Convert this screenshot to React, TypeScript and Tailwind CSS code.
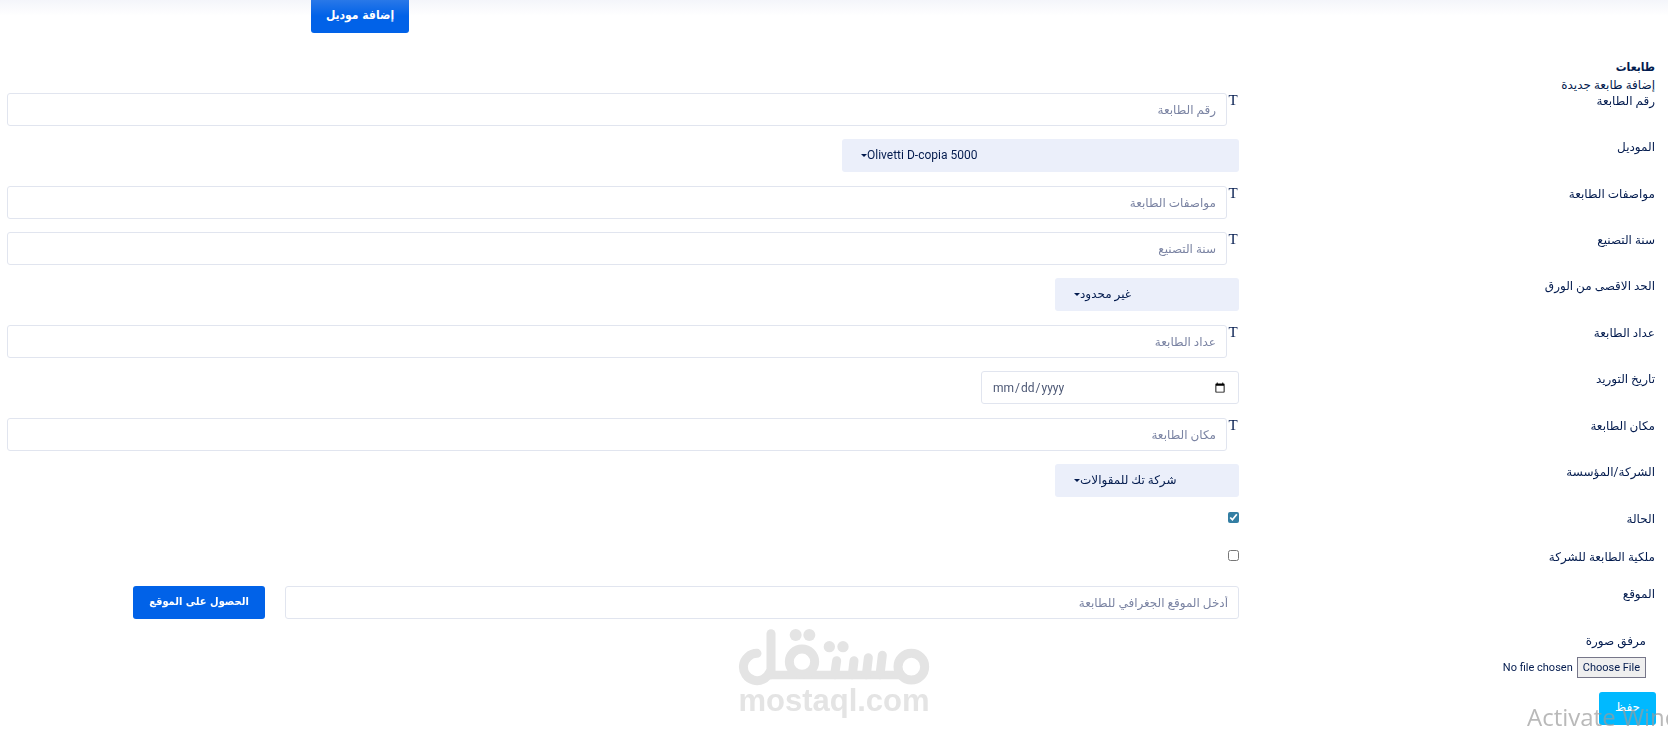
import type { ReactNode } from "react";

const LABEL = "w-1/4 shrink-0 pr-[13px] text-[12px] leading-[17px]";
const INPUT =
  "h-[33px] min-w-0 flex-1 rounded-[3px] border border-[#e1e5ef] bg-white px-[10px] text-[12px] text-[#4d5875] outline-none placeholder:text-[#7b84a3]";

// one form line: label on the right quarter, control in the rest
function Row({ id, label, className = "h-[46px]", children }: { id: string; label: string; className?: string; children: ReactNode }) {
  return (
    <div className={`flex ${className}`}>
      <label htmlFor={id} className={LABEL}>
        {label}
      </label>
      <div className="flex min-w-0 flex-1 items-start pr-[12px] pl-[7px]">{children}</div>
    </div>
  );
}

function TextRow({ id, label }: { id: string; label: string }) {
  return (
    <Row id={id} label={label}>
      <span className="w-[12px] text-center font-['Liberation_Serif',serif] text-[15px] leading-[14px]">T</span>
      <input id={id} type="text" placeholder={label} className={INPUT} />
    </Row>
  );
}

function SelectRow({ id, label, value, width }: { id: string; label: string; value: string; width: string }) {
  return (
    <Row id={id} label={label} className="h-[47px]">
      <div dir="ltr" className={`relative ${width}`}>
        <select
          id={id}
          className="h-[33px] w-full appearance-none rounded-[3px] bg-[#ebeffa] pr-[10px] pb-px pl-[25px] text-[12px] outline-none"
        >
          <option>{value}</option>
        </select>
        <svg viewBox="0 0 6 3" className="pointer-events-none absolute top-[15px] left-[19px] h-[3px] w-[6px]" fill="currentColor">
          <path d="M0 0h6L3 3z" />
        </svg>
      </div>
    </Row>
  );
}

function Watermark() {
  return (
    <div dir="ltr" className="pointer-events-none fixed bottom-[16px] left-1/2 flex w-[192px] -translate-x-1/2 flex-col items-center text-[#e4e4e4]">
      <svg viewBox="112 54 576 174" className="h-[58px] w-[192px]" fill="none" stroke="currentColor" strokeWidth="27" strokeLinecap="round">
        <circle cx="632" cy="170" r="40" />
        <path d="M205 195H605" strokeWidth="26" strokeLinecap="butt" />
        <path d="M545 136l-7 58M503 143l-6 51M460 152l-5 42M408 152l-6 42" />
        <circle cx="304" cy="155" r="38" />
        <path d="M211 71V194" />
        <path d="M169 130A41 41 0 1 0 207 187" />
        <g fill="currentColor" stroke="none">
          <circle cx="386" cy="110" r="17" />
          <circle cx="427" cy="110" r="17" />
          <circle cx="285" cy="75" r="18" />
          <circle cx="326" cy="75" r="18" />
        </g>
      </svg>
      <span className="font-['Liberation_Sans',sans-serif] text-[31px] leading-[30px] font-bold">mostaql.com</span>
    </div>
  );
}

export default function App() {
  return (
    <div
      dir="rtl"
      className="relative min-h-screen overflow-hidden bg-white pb-[7px] font-['Roboto','DejaVu_Sans',sans-serif] text-[12px] text-[#031b4e]"
    >
      <Watermark />
      <div className="pointer-events-none absolute inset-x-0 top-0 z-10 h-[16px] bg-gradient-to-b from-[#c8d0e8]/20 to-transparent" />

      <div className="flex justify-end pl-[311px]">
        <button
          type="button"
          className="h-[33px] w-[98px] rounded-b-[3px] bg-[#0162e8] pb-[3px] font-['DejaVu_Sans_Condensed',sans-serif] text-[12px] font-bold text-white"
        >
          إضافة موديل
        </button>
      </div>

      <header className="pt-[24px] pr-[13px]">
        <h1 className="font-['DejaVu_Sans_Condensed',sans-serif] text-[12px] leading-[20px] font-bold">طابعات</h1>
        <p className="leading-[16px]">إضافة طابعة جديدة</p>
      </header>

      <form className="relative">
        <TextRow id="number" label="رقم الطابعة" />
        <SelectRow id="model" label="الموديل" value="Olivetti D-copia 5000" width="w-[397px]" />
        <TextRow id="specs" label="مواصفات الطابعة" />
        <TextRow id="year" label="سنة التصنيع" />
        <SelectRow id="max-paper" label="الحد الاقصى من الورق" value="غير محدود" width="w-[184px]" />
        <TextRow id="counter" label="عداد الطابعة" />
        <Row id="supply-date" label="تاريخ التوريد" className="h-[47px]">
          <input
            id="supply-date"
            type="date"
            dir="ltr"
            className="h-[33px] w-[258px] rounded-[3px] border border-[#e1e5ef] bg-white px-[10px] text-[12px] text-[#4d5875] outline-none"
          />
        </Row>
        <TextRow id="place" label="مكان الطابعة" />
        <SelectRow id="company" label="الشركة/المؤسسة" value="شركة تك للمقوالات" width="w-[184px]" />
        <Row id="status" label="الحالة" className="h-[38px]">
          <input id="status" type="checkbox" defaultChecked className="mt-px h-[11px] w-[11px] accent-[#337ea3]" />
        </Row>
        <Row id="owned" label="ملكية الطابعة للشركة" className="h-[37px]">
          <input id="owned" type="checkbox" className="mt-px h-[11px] w-[11px] accent-[#337ea3]" />
        </Row>
        <div className="flex h-[47px]">
          <label htmlFor="location" className={LABEL}>
            الموقع
          </label>
          <div className="flex min-w-0 flex-1 items-start gap-[20px] pr-[12px] pl-[133px]">
            <input id="location" type="text" placeholder="أدخل الموقع الجغرافي للطابعة" className={INPUT} />
            <button
              type="button"
              className="h-[33px] w-[132px] rounded-[3px] bg-[#0162e8] font-['DejaVu_Sans_Condensed',sans-serif] text-[11px] font-bold text-white"
            >
              الحصول على الموقع
            </button>
          </div>
        </div>
        <div className="flex flex-col items-start pr-[22px]">
          <label htmlFor="photo" className="leading-[17px]">
            مرفق صورة
          </label>
          <input
            id="photo"
            type="file"
            className="mt-[7px] h-[21px] text-[11px] leading-[17px] file:ml-[4px] file:h-[21px] file:border file:border-solid file:border-[#767689] file:bg-[#efefef] file:px-[5px]"
          />
        </div>
        <div className="mt-[14px] pr-[12px]">
          <button type="submit" className="h-[33px] w-[57px] rounded-[3px] bg-[#00b9ff] pb-[3px] text-[12px] text-white">
            حفظ
          </button>
        </div>
      </form>

      <div
        dir="ltr"
        className="pointer-events-none fixed right-0 bottom-0 w-[141px] overflow-hidden font-['Open_Sans',sans-serif] text-[24px] leading-[30px] whitespace-nowrap text-[#9b9b9b]/70"
      >
        Activate Windows
      </div>
    </div>
  );
}
